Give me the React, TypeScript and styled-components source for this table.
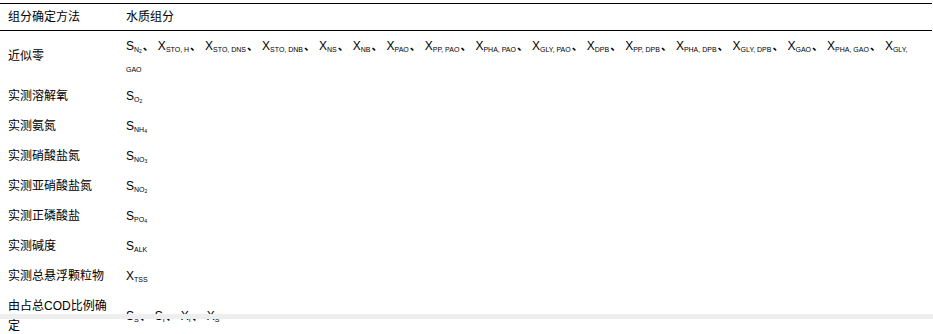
import React from "react";
import styled, { createGlobalStyle } from "styled-components";

const GlobalStyle = createGlobalStyle`
  html, body {
    margin: 0;
    padding: 0;
    background: #ffffff;
  }
  body {
    font-family: "Liberation Sans", "Noto Sans CJK SC", sans-serif;
    font-size: 12px;
    color: #000000;
    overflow: hidden;
  }
`;

const Page = styled.div`
  padding-top: 3px;
  width: 932px;
`;

const Row = styled.div<{ $head?: boolean }>`
  display: grid;
  grid-template-columns: 118px 1fr;
  align-items: center;
  line-height: 20px;
  border-top: ${(p) => (p.$head ? "1px solid #000000" : "none")};
  border-bottom: ${(p) => (p.$head ? "1px solid #000000" : "none")};
`;

const Cell = styled.div<{ $head?: boolean }>`
  padding: ${(p) => (p.$head ? "3px 8px 3px" : "5px 8px")};
  min-width: 0;
`;

const Sub = styled.sub`
  font-size: 7px;
  line-height: 0;
  vertical-align: -2px;
`;

const SubSub = styled.sub`
  font-size: 5px;
  line-height: 0;
  vertical-align: -1px;
`;

const Sep = styled.span`
  display: inline-block;
  width: 16px;
  padding-left: 1px;
  box-sizing: border-box;
  font-family: "Noto Sans CJK SC", sans-serif;
  font-size: 11px;
  font-weight: bold;
  line-height: 0;
`;

const ScrollTrack = styled.div`
  position: fixed;
  left: 0;
  right: 0;
  top: 314px;
  height: 5px;
  background: #eeeeee;
`;

type Sym = { base: string; sub: string; subsub?: string };

function Symbol({ s }: { s: Sym }) {
  return (
    <>
      {s.base}
      <Sub>
        {s.sub}
        {s.subsub && <SubSub>{s.subsub}</SubSub>}
      </Sub>
    </>
  );
}

function SymbolList({ items }: { items: Sym[] }) {
  return (
    <>
      {items.map((s, i) => (
        <React.Fragment key={i}>
          <Symbol s={s} />
          {i < items.length - 1 && <Sep>、</Sep>}
        </React.Fragment>
      ))}
    </>
  );
}

const nearZero: Sym[] = [
  { base: "S", sub: "N", subsub: "2" },
  { base: "X", sub: "STO, H" },
  { base: "X", sub: "STO, DNS" },
  { base: "X", sub: "STO, DNB" },
  { base: "X", sub: "NS" },
  { base: "X", sub: "NB" },
  { base: "X", sub: "PAO" },
  { base: "X", sub: "PP, PAO" },
  { base: "X", sub: "PHA, PAO" },
  { base: "X", sub: "GLY, PAO" },
  { base: "X", sub: "DPB" },
  { base: "X", sub: "PP, DPB" },
  { base: "X", sub: "PHA, DPB" },
  { base: "X", sub: "GLY, DPB" },
  { base: "X", sub: "GAO" },
  { base: "X", sub: "PHA, GAO" },
  { base: "X", sub: "GLY, GAO" },
];

const rows: { method: string; items: Sym[] }[] = [
  { method: "近似零", items: nearZero },
  { method: "实测溶解氧", items: [{ base: "S", sub: "O", subsub: "2" }] },
  { method: "实测氨氮", items: [{ base: "S", sub: "NH", subsub: "4" }] },
  { method: "实测硝酸盐氮", items: [{ base: "S", sub: "NO", subsub: "3" }] },
  { method: "实测亚硝酸盐氮", items: [{ base: "S", sub: "NO", subsub: "2" }] },
  { method: "实测正磷酸盐", items: [{ base: "S", sub: "PO", subsub: "4" }] },
  { method: "实测碱度", items: [{ base: "S", sub: "ALK" }] },
  { method: "实测总悬浮颗粒物", items: [{ base: "X", sub: "TSS" }] },
  {
    method: "由占总COD比例确定",
    items: [
      { base: "S", sub: "S" },
      { base: "S", sub: "I" },
      { base: "X", sub: "I" },
      { base: "X", sub: "S" },
    ],
  },
];

export default function App() {
  return (
    <Page>
      <GlobalStyle />
      <Row $head>
        <Cell $head>组分确定方法</Cell>
        <Cell $head>水质组分</Cell>
      </Row>
      {rows.map((r) => (
        <Row key={r.method}>
          <Cell>{r.method}</Cell>
          <Cell>
            <SymbolList items={r.items} />
          </Cell>
        </Row>
      ))}
      <ScrollTrack />
    </Page>
  );
}
